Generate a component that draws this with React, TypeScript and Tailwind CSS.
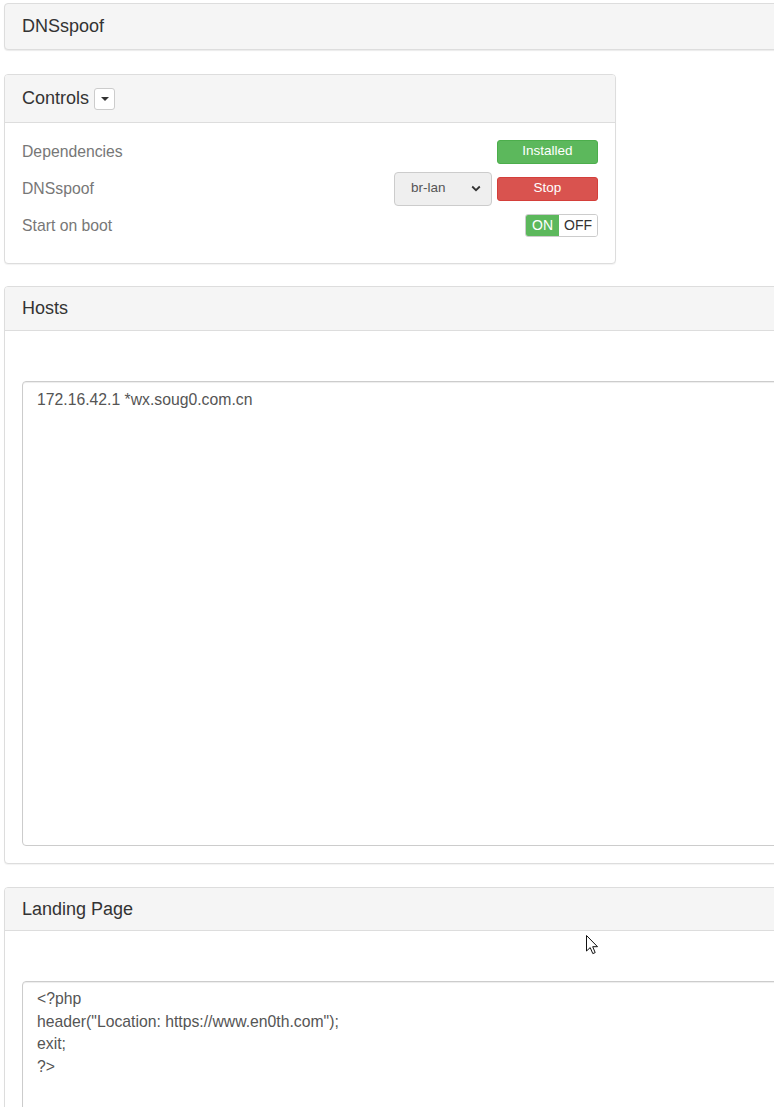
import React from "react";

const hosts = "172.16.42.1 *wx.soug0.com.cn";
const landing = `<?php
header("Location: https://www.en0th.com");
exit;
?>`;

function PanelHeading({ children, className = "" }: { children: React.ReactNode; className?: string }) {
  return (
    <div className={`flex items-center border-b border-[#ddd] bg-[#f5f5f5] px-[17px] text-[18px] text-[#333] ${className}`}>
      {children}
    </div>
  );
}

function Cursor() {
  return (
    <svg className="pointer-events-none absolute left-[586px] top-[935px]" width="13" height="20" viewBox="0 0 13 20">
      <path
        d="M0.5 0.5 L0.5 16 L4.2 12.6 L6.8 18.6 L9.2 17.6 L6.7 11.7 L11.5 11.7 Z"
        fill="#fff"
        stroke="#111"
        strokeWidth="1"
        strokeLinejoin="round"
      />
    </svg>
  );
}

export default function App() {
  return (
    <div className="relative min-h-screen overflow-hidden bg-white pl-1 pt-[3px] font-['Liberation_Sans',Arial,sans-serif] text-[15.75px] text-[#333]">
      {/* title bar */}
      <div className="flex h-[47px] w-[800px] items-center rounded border border-[#ddd] bg-[#f5f5f5] px-[17px] text-[18px] shadow-[0_1px_1px_rgba(0,0,0,0.08)]">
        DNSspoof
      </div>

      {/* controls */}
      <div className="mt-[24px] w-[612px] overflow-hidden rounded border border-[#ddd] bg-white shadow-[0_1px_1px_rgba(0,0,0,0.05)]">
        <PanelHeading className="h-[48px] gap-[5px]">
          <span>Controls</span>
          <button className="flex h-[22px] w-[21px] items-center justify-center rounded-[3px] border border-[#ccc] bg-white">
            <span className="h-0 w-0 border-x-[4px] border-t-[4px] border-x-transparent border-t-[#333]" />
          </button>
        </PanelHeading>
        <div className="flex flex-col gap-[14px] pb-[26px] pl-[17px] pr-[17px] pt-[17px] text-[#777]">
          <div className="flex h-[23px] items-center justify-between">
            <span>Dependencies</span>
            <button className="h-[24px] w-[101px] rounded-[3px] border border-[#4cae4c] bg-[#5cb85c] text-[13.5px] text-white">
              Installed
            </button>
          </div>
          <div className="flex h-[23px] items-center justify-between">
            <span>DNSspoof</span>
            <div className="flex items-center gap-[5px]">
              <div className="flex h-[34px] w-[98px] items-center justify-between rounded border border-[#ccc] bg-[#efefef] pl-[16px] pr-[10px] text-[13.5px] text-[#555]">
                <span>br-lan</span>
                <svg width="10" height="7" viewBox="0 0 10 7">
                  <path d="M1.2 1.5 L5 5.2 L8.8 1.5" fill="none" stroke="#333" strokeWidth="1.8" />
                </svg>
              </div>
              <button className="h-[24px] w-[101px] rounded-[3px] border border-[#d43f3a] bg-[#d9534f] text-[13.5px] text-white">
                Stop
              </button>
            </div>
          </div>
          <div className="flex h-[23px] items-center justify-between">
            <span>Start on boot</span>
            <div className="flex h-[23px] overflow-hidden rounded-[3px] border border-[#ccc] text-[14px]">
              <span className="flex w-[33px] items-center justify-center bg-[#5cb85c] text-white">ON</span>
              <span className="flex w-[38px] items-center justify-center bg-white text-[#333]">OFF</span>
            </div>
          </div>
        </div>
      </div>

      {/* hosts */}
      <div className="mt-[22px] w-[800px] overflow-hidden rounded border border-[#ddd] bg-white shadow-[0_1px_1px_rgba(0,0,0,0.05)]">
        <PanelHeading className="h-[44px]">Hosts</PanelHeading>
        <div className="pb-[17px] pl-[17px] pt-[50px]">
          <textarea
            readOnly
            defaultValue={hosts}
            className="block h-[465px] w-[800px] resize-none rounded border border-[#ccc] bg-white px-[14px] pt-[7px] font-['Liberation_Sans',Arial,sans-serif] text-[15.75px] leading-[22.6px] text-[#555] shadow-[inset_0_1px_1px_rgba(0,0,0,0.075)] outline-none"
          />
        </div>
      </div>

      {/* landing page */}
      <div className="mt-[23px] w-[800px] overflow-hidden rounded border border-[#ddd] bg-white shadow-[0_1px_1px_rgba(0,0,0,0.05)]">
        <PanelHeading className="h-[43px]">Landing Page</PanelHeading>
        <div className="pb-[17px] pl-[17px] pt-[50px]">
          <textarea
            readOnly
            defaultValue={landing}
            className="block h-[300px] w-[800px] resize-none rounded border border-[#ccc] bg-white px-[14px] pt-[6px] font-['Liberation_Sans',Arial,sans-serif] text-[15.75px] leading-[22.6px] text-[#555] shadow-[inset_0_1px_1px_rgba(0,0,0,0.075)] outline-none"
          />
        </div>
      </div>

      <Cursor />
    </div>
  );
}
